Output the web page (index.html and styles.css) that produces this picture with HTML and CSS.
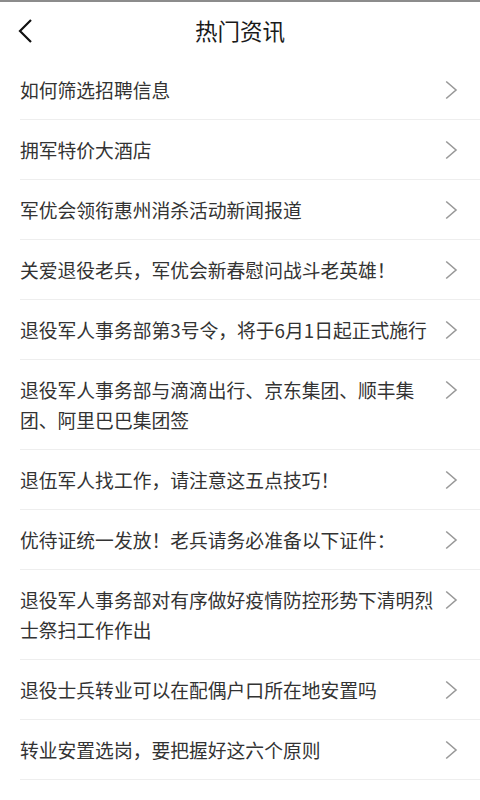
FILE: index.html
```html
<!DOCTYPE html>
<html lang="zh-CN">
<head>
<meta charset="utf-8">
<title>热门资讯</title>
<link rel="stylesheet" href="styles.css">
</head>
<body>
<div class="topline"></div>
<header class="header">
  <span class="back">
    <svg width="16" height="26" viewBox="0 0 16 26"><path d="M14 2 L3 13 L14 24" fill="none" stroke="#111" stroke-width="2.2"/></svg>
  </span>
  <h1 class="title">热门资讯</h1>
</header>
<ul class="list">
  <li class="item"><span class="text">如何筛选招聘信息</span><span class="arrow"><svg width="13" height="20" viewBox="0 0 13 20"><path d="M1.2 1.5 L11 10 L1.2 18.5" fill="none" stroke="#999" stroke-width="1.6"/></svg></span></li>
  <li class="item"><span class="text">拥军特价大酒店</span><span class="arrow"><svg width="13" height="20" viewBox="0 0 13 20"><path d="M1.2 1.5 L11 10 L1.2 18.5" fill="none" stroke="#999" stroke-width="1.6"/></svg></span></li>
  <li class="item"><span class="text">军优会领衔惠州消杀活动新闻报道</span><span class="arrow"><svg width="13" height="20" viewBox="0 0 13 20"><path d="M1.2 1.5 L11 10 L1.2 18.5" fill="none" stroke="#999" stroke-width="1.6"/></svg></span></li>
  <li class="item"><span class="text">关爱退役老兵，军优会新春慰问战斗老英雄！</span><span class="arrow"><svg width="13" height="20" viewBox="0 0 13 20"><path d="M1.2 1.5 L11 10 L1.2 18.5" fill="none" stroke="#999" stroke-width="1.6"/></svg></span></li>
  <li class="item"><span class="text">退役军人事务部第3号令，将于6月1日起正式施行</span><span class="arrow"><svg width="13" height="20" viewBox="0 0 13 20"><path d="M1.2 1.5 L11 10 L1.2 18.5" fill="none" stroke="#999" stroke-width="1.6"/></svg></span></li>
  <li class="item"><span class="text">退役军人事务部与滴滴出行、京东集团、顺丰集团、阿里巴巴集团签</span><span class="arrow"><svg width="13" height="20" viewBox="0 0 13 20"><path d="M1.2 1.5 L11 10 L1.2 18.5" fill="none" stroke="#999" stroke-width="1.6"/></svg></span></li>
  <li class="item"><span class="text">退伍军人找工作，请注意这五点技巧！</span><span class="arrow"><svg width="13" height="20" viewBox="0 0 13 20"><path d="M1.2 1.5 L11 10 L1.2 18.5" fill="none" stroke="#999" stroke-width="1.6"/></svg></span></li>
  <li class="item"><span class="text">优待证统一发放！老兵请务必准备以下证件：</span><span class="arrow"><svg width="13" height="20" viewBox="0 0 13 20"><path d="M1.2 1.5 L11 10 L1.2 18.5" fill="none" stroke="#999" stroke-width="1.6"/></svg></span></li>
  <li class="item"><span class="text">退役军人事务部对有序做好疫情防控形势下清明烈士祭扫工作作出</span><span class="arrow"><svg width="13" height="20" viewBox="0 0 13 20"><path d="M1.2 1.5 L11 10 L1.2 18.5" fill="none" stroke="#999" stroke-width="1.6"/></svg></span></li>
  <li class="item"><span class="text">退役士兵转业可以在配偶户口所在地安置吗</span><span class="arrow"><svg width="13" height="20" viewBox="0 0 13 20"><path d="M1.2 1.5 L11 10 L1.2 18.5" fill="none" stroke="#999" stroke-width="1.6"/></svg></span></li>
  <li class="item"><span class="text">转业安置选岗，要把握好这六个原则</span><span class="arrow"><svg width="13" height="20" viewBox="0 0 13 20"><path d="M1.2 1.5 L11 10 L1.2 18.5" fill="none" stroke="#999" stroke-width="1.6"/></svg></span></li>
</ul>
</body>
</html>
```
FILE: styles.css
```css
* { box-sizing: border-box; }
html, body {
  margin: 0;
  padding: 0;
  background: #fff;
  font-family: "Noto Sans CJK SC", "Noto Sans", sans-serif;
}
.topline {
  height: 2px;
  background: #8c8c8c;
}
.header {
  position: relative;
  height: 58px;
  display: flex;
  align-items: center;
  justify-content: center;
}
.back {
  position: absolute;
  left: 17px;
  top: 16px;
  width: 16px;
  height: 26px;
  display: flex;
}
.title {
  margin: 0;
  font-size: 22.5px;
  font-weight: 400;
  color: #1a1a1a;
  line-height: 30px;
  padding-bottom: 2px;
}
.list {
  list-style: none;
  margin: 0;
  padding: 0 0 0 20px;
}
.item {
  display: flex;
  align-items: flex-start;
  padding: 15px 0 14px 0;
  border-bottom: 1px solid #eeeeee;
}
.text {
  flex: 1;
  font-size: 18.8px;
  line-height: 30px;
  color: #333;
  max-width: 425px;
}
.arrow {
  width: 35px;
  height: 30px;
  display: flex;
  align-items: center;
  margin-left: auto;
}
```
